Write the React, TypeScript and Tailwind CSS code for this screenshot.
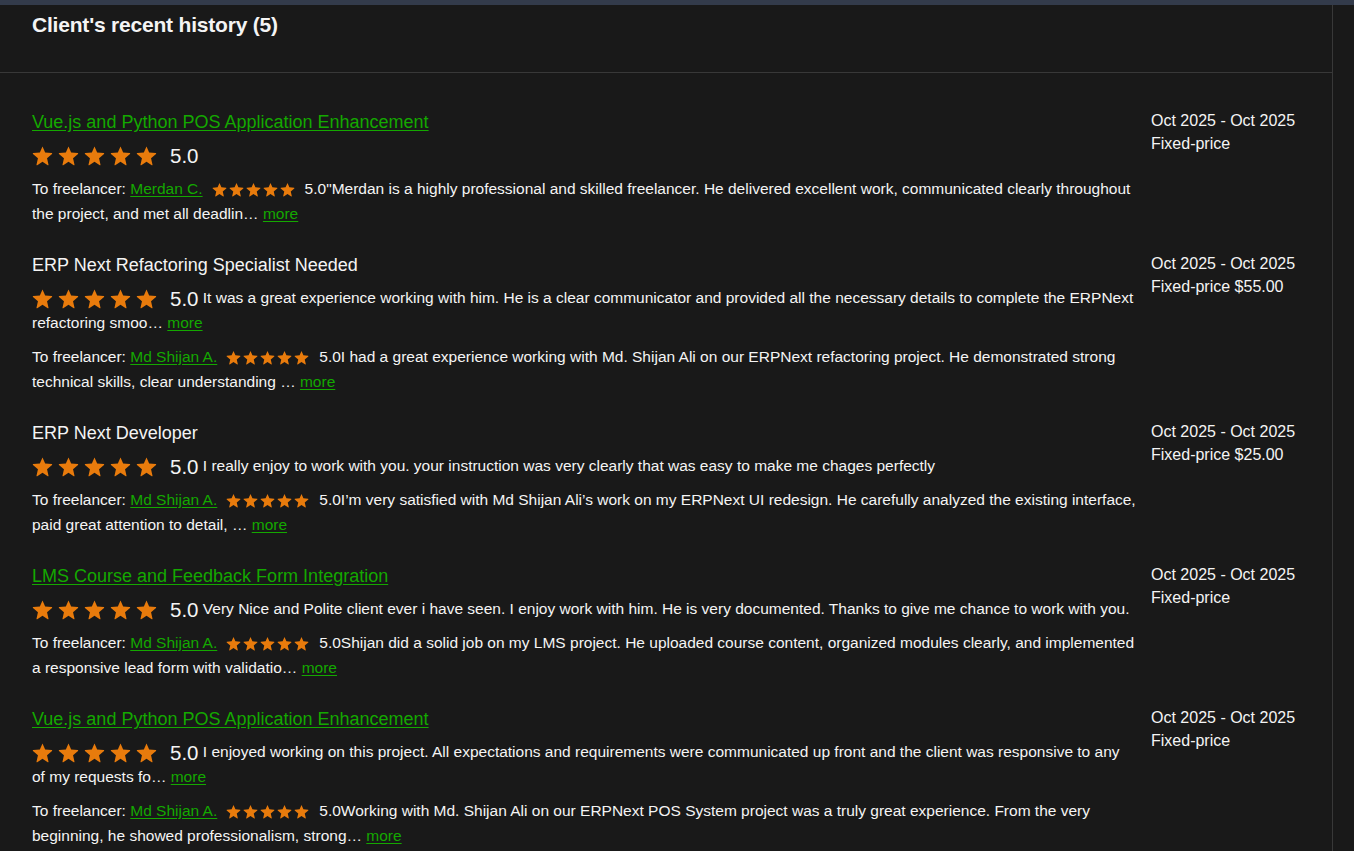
import React from 'react'

type Job = {
  title: string
  link?: boolean
  comment?: string
  commentMore?: boolean
  freelancer: string
  review: string
  price: string
}

const jobs: Job[] = [
  {
    title: 'Vue.js and Python POS Application Enhancement',
    link: true,
    freelancer: 'Merdan C.',
    review:
      '"Merdan is a highly professional and skilled freelancer. He delivered excellent work, communicated clearly throughout the project, and met all deadlin…',
    price: 'Fixed-price',
  },
  {
    title: 'ERP Next Refactoring Specialist Needed',
    comment:
      'It was a great experience working with him. He is a clear communicator and provided all the necessary details to complete the ERPNext refactoring smoo…',
    commentMore: true,
    freelancer: 'Md Shijan A.',
    review:
      'I had a great experience working with Md. Shijan Ali on our ERPNext refactoring project. He demonstrated strong technical skills, clear understanding …',
    price: 'Fixed-price $55.00',
  },
  {
    title: 'ERP Next Developer',
    comment: 'I really enjoy to work with you. your instruction was very clearly that was easy to make me chages perfectly',
    freelancer: 'Md Shijan A.',
    review:
      'I’m very satisfied with Md Shijan Ali’s work on my ERPNext UI redesign. He carefully analyzed the existing interface, paid great attention to detail, …',
    price: 'Fixed-price $25.00',
  },
  {
    title: 'LMS Course and Feedback Form Integration',
    link: true,
    comment: 'Very Nice and Polite client ever i have seen. I enjoy work with him. He is very documented. Thanks to give me chance to work with you.',
    freelancer: 'Md Shijan A.',
    review:
      'Shijan did a solid job on my LMS project. He uploaded course content, organized modules clearly, and implemented a responsive lead form with validatio…',
    price: 'Fixed-price',
  },
  {
    title: 'Vue.js and Python POS Application Enhancement',
    link: true,
    comment:
      'I enjoyed working on this project. All expectations and requirements were communicated up front and the client was responsive to any of\u00a0my requests fo…',
    commentMore: true,
    freelancer: 'Md Shijan A.',
    review:
      'Working with Md. Shijan Ali on our ERPNext POS System project was a truly great experience. From the very beginning, he showed professionalism, strong…',
    price: 'Fixed-price',
  },
]

const Star = ({ size }: { size: number }) => (
  <svg width={size} height={size} viewBox="0 0 24 24" fill="#e87b0c">
    <path d="M12 1.6l3.05 6.9 7.5.7c.5.05.7.67.32 1l-5.67 4.95 1.67 7.35c.11.49-.42.87-.85.61L12 19.25l-6.02 3.86c-.43.26-.96-.12-.85-.61l1.67-7.35L1.13 10.2c-.38-.33-.18-.95.32-1l7.5-.7L12 1.6z" />
  </svg>
)

const Stars = ({ size, gap }: { size: number; gap: string }) => (
  <span className={`inline-flex align-middle ${gap}`}>
    {[0, 1, 2, 3, 4].map((i) => (
      <Star key={i} size={size} />
    ))}
  </span>
)

const More = () => (
  <a href="#" className="text-[#14a800] underline underline-offset-2">
    more
  </a>
)

const App = () => {
  return (
    <div className="min-h-screen bg-[#191919] text-[#f4f4f4]" style={{ fontFamily: '"Liberation Sans", Arial, sans-serif' }}>
      <div className="h-[5px] bg-[#333b4b]" />
      <div className="w-[1333px] border-r border-[#383838] min-h-[846px]">
        <header className="h-[68px] border-b border-[#383838] px-8 pt-[5px]">
          <h2 className="text-[21px] leading-[30px] font-bold tracking-[-0.2px]">Client's recent history (5)</h2>
        </header>

        <div className="pt-[36px] flex flex-col gap-[26px]">
          {jobs.map((job, i) => (
            <div key={i} className="flex gap-3 pl-8 pr-8">
              <div className="flex-1 min-w-0">
                {job.link ? (
                  <a href="#" className="block text-[18px] leading-[26px] text-[#14a800] underline underline-offset-2">
                    {job.title}
                  </a>
                ) : (
                  <div className="text-[18px] leading-[26px]">{job.title}</div>
                )}

                <div className="mt-[7px] leading-[25px] text-[15.5px]">
                  <Stars size={21} gap="gap-[5px]" />
                  <span className="ml-[13px] text-[20.5px] leading-none align-middle">5.0</span>
                  {job.comment && (
                    <>
                      {' '}
                      {job.comment}
                      {job.commentMore && (
                        <>
                          {' '}
                          <More />
                        </>
                      )}
                    </>
                  )}
                </div>

                <div className="mt-[9px] text-[15.5px] leading-[25px]">
                  To freelancer:{' '}
                  <a href="#" className="text-[#14a800] underline underline-offset-2">
                    {job.freelancer}
                  </a>
                  <span className="ml-[9px]">
                    <Stars size={15} gap="gap-[2px]" />
                  </span>
                  <span className="ml-[10px]">5.0</span>
                  {job.review} <More />
                </div>
              </div>

              <div className="w-[149px] shrink-0 text-[16px] leading-[23px] whitespace-nowrap">
                <div>Oct 2025 - Oct 2025</div>
                <div>{job.price}</div>
              </div>
            </div>
          ))}
        </div>
      </div>
    </div>
  )
}

export default App
